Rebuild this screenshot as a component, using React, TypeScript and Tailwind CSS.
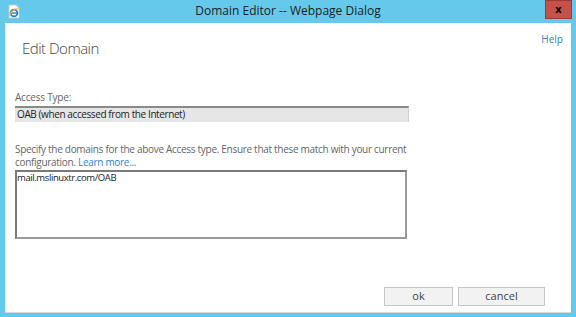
import React from 'react';

const IeIcon: React.FC = () => (
  <svg width="14" height="15" viewBox="0 0 14 15">
    <path d="M2 1h7l3 3v10H2z" fill="#ffffff" stroke="#c8c8c8" strokeWidth="0.8" />
    <circle cx="7" cy="9" r="3.4" fill="none" stroke="#2d7fd0" strokeWidth="1.8" />
    <path d="M4 9h6" stroke="#2d7fd0" strokeWidth="1.4" />
    <path d="M2.5 11.5c2-5 6-7.5 9-6.5" fill="none" stroke="#f2b21c" strokeWidth="1.2" />
  </svg>
);

export default function App() {
  return (
    <div
      className="w-[576px] h-[317px] bg-[#65c9eb] flex flex-col overflow-hidden"
      style={{ fontFamily: '"Open Sans", "Noto Sans", sans-serif' }}
    >
      <div className="h-[23px] flex items-start">
        <div className="pl-[7px] pt-[4px]">
          <IeIcon />
        </div>
        <div className="flex-1 text-center text-[12px] leading-[22px] text-[#1e1e1e] pl-[10px]">
          Domain Editor -- Webpage Dialog
        </div>
        <div className="w-[27px] h-[19px] mr-[4px] bg-[#c7504a] border border-[#9c3b36] flex items-center justify-center text-[11px] font-bold text-black">
          x
        </div>
      </div>
      <div className="mx-[5px] mb-[4px] flex-1 bg-white border-b border-[#d6d6d6] flex flex-col text-[#444]">
        <div className="flex justify-between">
          <div className="pl-[17px] pt-[14px] text-[15px] font-light text-[#444] tracking-[-0.5px]">Edit Domain</div>
          <div className="pr-[8px] pt-[9px] text-[10px] text-[#2a86d2]">Help</div>
        </div>
        <div className="pl-[10px] pt-[30px] text-[10px] text-[#666] leading-[14px] tracking-[-0.2px]">Access Type:</div>
        <div className="ml-[10px] mt-[2px] w-[394px] h-[16px] bg-[#e6e6e6] border-t-2 border-[#8a8a8a] border-r border-r-[#d0d0d0] text-[10px] text-[#222] leading-[13px] pl-[2px] tracking-[-0.4px]">
          OAB (when accessed from the Internet)
        </div>
        <div className="pl-[10px] pt-[21px] text-[10px] text-[#666] leading-[13px] tracking-[-0.3px]">
          <div>Specify the domains for the above Access type. Ensure that these match with your current</div>
          <div>
            configuration. <span className="text-[#2a86d2]">Learn more...</span>
          </div>
        </div>
        <div className="ml-[10px] mt-[1px] w-[392px] h-[69px] border-2 border-[#7a7a7a] border-b-[#9a9a9a] border-r-[#9a9a9a] text-[9.5px] text-[#222] leading-[12px] tracking-[-0.4px]">
          mail.mslinuxtr.com/OAB
        </div>
        <div className="flex-1" />
        <div className="flex justify-end gap-[5px] pr-[26px] pb-[6px]">
          <div className="w-[69px] h-[19px] bg-[#f2f2f2] border border-[#c6c6c6] text-[11px] text-[#444] flex items-center justify-center">ok</div>
          <div className="w-[87px] h-[19px] bg-[#f2f2f2] border border-[#c6c6c6] text-[11px] text-[#444] flex items-center justify-center">cancel</div>
        </div>
      </div>
    </div>
  );
}
